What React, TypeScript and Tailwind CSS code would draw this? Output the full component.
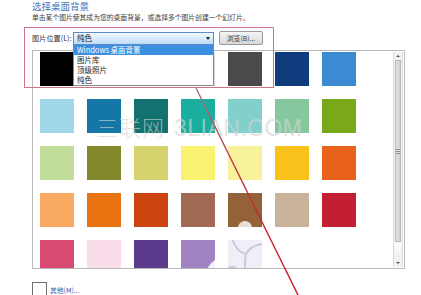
import React from "react";

const rows: string[][] = [
  ["#000000", "#6e6e6e", "#a0a0a0", "#d4d4d4", "#4a4a4a", "#0f3c7c", "#3b8ad2"],
  ["#a0d8ea", "#1577a8", "#127270", "#1aae9e", "#82d0cc", "#86c89e", "#79a81b"],
  ["#c2dc9a", "#83892a", "#d6d26e", "#f9f271", "#f8f29c", "#f9c21a", "#e8621b"],
  ["#f8aa62", "#e8720f", "#c9440f", "#a26a54", "#936238", "#c9b39b", "#c22032"],
  ["#d94a73", "#f9dcea", "#5a3a8a", "#a283c2", "#f0eef6"],
];

function Swatch({ color, r, c }: { color: string; r: number; c: number }) {
  return (
    <div className="relative w-[34px] h-[34px] overflow-hidden" style={{ backgroundColor: color }}>
      {r === 4 && c === 3 && (
        <svg className="absolute inset-0" width="34" height="34" viewBox="0 0 34 34">
          <path d="M24 34 Q28 22 40 16 L40 34 Z" fill="#f4f2f8" />
        </svg>
      )}
      {r === 4 && c === 4 && (
        <svg className="absolute inset-0" width="34" height="34" viewBox="0 0 34 34" fill="none" stroke="#cdc8dc" strokeWidth="2">
          <path d="M4 -2 Q8 12 18 14" />
          <path d="M34 4 Q22 6 18 14 Q16 22 18 34" />
          <path d="M-2 30 Q6 22 12 34" />
        </svg>
      )}
      {r === 3 && c === 4 && (
        <div className="absolute left-[10px] top-[28px] w-[14px] h-[14px] rounded-full bg-[#e8e0d4]" />
      )}
    </div>
  );
}

export default function App() {
  return (
    <div
      className="relative w-[421px] h-[295px] overflow-hidden bg-white pl-[32px]"
      style={{ fontFamily: '"Noto Sans CJK SC", "Noto Sans", sans-serif' }}
    >
      <div className="text-[9.5px] leading-[12px] text-[#3f72b8]">选择桌面背景</div>
      <div className="text-[6.8px] leading-[10px] text-[#3a3a3a] whitespace-nowrap">
        单击某个图片使其成为您的桌面背景，或选择多个图片创建一个幻灯片。
      </div>

      {/* picture location row */}
      <div className="mt-[9px] flex items-center h-[14px]">
        <span className="w-[41px] text-[7.2px] leading-[10px] text-[#333] whitespace-nowrap">图片位置(L):</span>
        <div className="relative w-[141px] h-[13px] border border-[#5b8bc9] bg-gradient-to-b from-[#f4f9ff] to-[#bcdcf6] flex items-center pl-[3px]">
          <span className="text-[7.5px] leading-[10px] text-[#222]">纯色</span>
          <span className="absolute right-[3px] top-[4px] w-0 h-0 border-l-[2.5px] border-r-[2.5px] border-t-[3px] border-l-transparent border-r-transparent border-t-[#222]" />
        </div>
        <button className="ml-[5px] w-[44px] h-[14px] rounded-[2px] border border-[#9a9a9a] bg-gradient-to-b from-[#f6f6f6] to-[#d9d9d9] text-[6.8px] leading-[10px] text-[#333]">
          浏览(B)...
        </button>
      </div>

      {/* swatch panel */}
      <div className="mt-[5px] w-[373px] h-[219px] border border-[#b9b9b9] flex overflow-hidden">
        <div className="flex-1 pl-[7px] pt-[1px] overflow-hidden">
          <div className="grid grid-cols-[repeat(7,34px)] gap-[13px]">
            {rows.map((row, r) =>
              row.map((color, c) => <Swatch key={`${r}-${c}`} color={color} r={r} c={c} />)
            )}
          </div>
        </div>
        <div className="w-[10px] mr-[1px] my-[1px] border-x border-[#dcdcdc] bg-[#f2f2f2] flex flex-col items-center">
          <div className="h-[8px] flex items-center justify-center">
            <span className="w-0 h-0 border-l-[2px] border-r-[2px] border-b-[2.5px] border-l-transparent border-r-transparent border-b-[#555]" />
          </div>
          <div className="flex-1 w-full px-[1px] flex flex-col">
            <div className="h-[182px] w-full border border-[#b8b8b8] bg-gradient-to-r from-[#e2e2e2] to-[#cfcfcf] flex items-center justify-center">
              <div className="w-[4px] h-[5px] bg-[repeating-linear-gradient(#8c8c8c_0_1px,#e8e8e8_1px_2px)]" />
            </div>
            <div className="h-[10px] w-full bg-[#fafafa]" />
          </div>
          <div className="h-[8px] flex items-center justify-center">
            <span className="w-0 h-0 border-l-[2px] border-r-[2px] border-t-[2.5px] border-l-transparent border-r-transparent border-t-[#555]" />
          </div>
        </div>
      </div>

      {/* other */}
      <div className="mt-[13px] flex items-center">
        <div className="w-[15px] h-[15px] border border-[#6f6f6f]" />
        <span className="ml-[3px] text-[6.8px] leading-[10px] text-[#2a62b0]">其他(M)...</span>
      </div>

      {/* open dropdown list */}
      <div className="absolute left-[73px] top-[45px] w-[141px] h-[41px] border border-[#8a8a8a] border-t-0 bg-white flex flex-col">
        <div className="h-[10px] bg-[#3b8fe0] text-white text-[7.5px] leading-[10px] pl-[3px]">Windows 桌面背景</div>
        <div className="h-[10px] text-[#222] text-[7.5px] leading-[10px] pl-[3px]">图片库</div>
        <div className="h-[10px] text-[#222] text-[7.5px] leading-[10px] pl-[3px]">顶级照片</div>
        <div className="h-[10px] text-[#222] text-[7.5px] leading-[10px] pl-[3px]">纯色</div>
      </div>

      {/* annotation box */}
      <div className="absolute left-[24px] top-[27px] w-[250px] h-[61px] border border-[#d27383] pointer-events-none" />

      {/* watermark */}
      <div className="absolute left-[96px] top-[110px] flex items-baseline text-[#d4d4d4]/65 whitespace-nowrap pointer-events-none">
        <span className="text-[22px] leading-[32px] tracking-[1px] font-light">三联网</span>
        <span
          className="ml-[9px] text-[23px] leading-[32px] tracking-[0.5px]"
          style={{ fontFamily: '"Liberation Sans", Arial, sans-serif' }}
        >
          3LIAN.COM
        </span>
      </div>

      {/* annotation arrow line */}
      <svg className="absolute inset-0 pointer-events-none" width="421" height="295" viewBox="0 0 421 295">
        <defs>
          <linearGradient id="ln" x1="0" y1="88" x2="0" y2="295" gradientUnits="userSpaceOnUse">
            <stop offset="0" stopColor="#9a7a80" />
            <stop offset="0.4" stopColor="#c23040" />
            <stop offset="1" stopColor="#d0101c" />
          </linearGradient>
        </defs>
        <line x1="196" y1="88" x2="298" y2="295" stroke="url(#ln)" strokeWidth="1.4" />
      </svg>
    </div>
  );
}
